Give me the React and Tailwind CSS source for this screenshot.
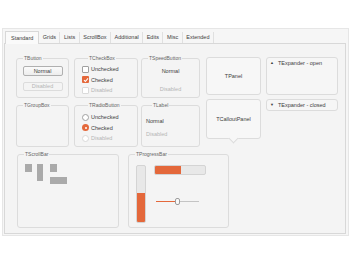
import React from 'react';

const tabs = ['Standard', 'Grids', 'Lists', 'ScrollBox', 'Additional', 'Edits', 'Misc', 'Extended'];

const Group = ({ title, className, children }) => (
    <fieldset className={`border border-[#dcdcdc] rounded-[3px] min-w-0 ${className}`}>
        <legend className="ml-[6px] px-[1px] text-[5px] leading-[6px] text-[#666]">{title}</legend>
        {children}
    </fieldset>
);

const Check = ({ state, label }) => (
    <div className="flex items-center gap-[2px] h-[10.5px]">
        {state === 'checked' ? (
            <div className="w-[7px] h-[7px] rounded-[1px] bg-[#e4683b] flex items-center justify-center">
                <svg width="6" height="6" viewBox="0 0 6 6">
                    <path d="M1 3.1 L2.4 4.5 L5 1.4" stroke="#fff" strokeWidth="1.1" fill="none" />
                </svg>
            </div>
        ) : (
            <div className={`w-[7px] h-[7px] rounded-[1px] border bg-white ${state === 'disabled' ? 'border-[#dadada]' : 'border-[#a0a0a0]'}`} />
        )}
        <span className={state === 'disabled' ? 'text-[#b4b4b4]' : 'text-[#404040]'}>{label}</span>
    </div>
);

const Radio = ({ state, label }) => (
    <div className="flex items-center gap-[2px] h-[10.5px]">
        {state === 'checked' ? (
            <div className="w-[7px] h-[7px] rounded-full bg-[#e4683b] flex items-center justify-center">
                <div className="w-[2px] h-[2px] rounded-full bg-white" />
            </div>
        ) : (
            <div className={`w-[7px] h-[7px] rounded-full border bg-white ${state === 'disabled' ? 'border-[#dadada]' : 'border-[#a0a0a0]'}`} />
        )}
        <span className={state === 'disabled' ? 'text-[#b4b4b4]' : 'text-[#404040]'}>{label}</span>
    </div>
);

export default function App() {
    return (
        <div className="w-[350px] h-[265px] bg-white font-['Liberation_Sans',Arial,sans-serif] text-[5.5px] text-[#404040] pt-[28px] pl-[2px]">
            <div className="w-[347px] h-[208px] bg-[#f6f6f6] border border-[#e6e6e6] pl-[1px] pt-[1px]">
                {/* tab strip */}
                <div className="flex h-[13px] items-end">
                    {tabs.map((t, i) => (
                        i === 0 ? (
                            <div key={t} className="h-[13px] px-[5px] flex items-center bg-[#fafafa] border border-b-0 border-[#d8d8d8] rounded-t-[1px] relative top-[1px] ml-[1px]">
                                {t}
                            </div>
                        ) : (
                            <div key={t} className="h-[12px] flex items-center">
                                <span className="px-[3.5px]">{t}</span>
                                <span className="w-px h-[11px] bg-[#e0e0e0]" />
                            </div>
                        )
                    ))}
                </div>

                {/* content panel */}
                <div className="w-[342px] h-[191px] bg-[#f4f4f4] border border-[#d8d8d8] pl-[11px] pt-[11px]">
                    <div className="flex items-start">
                        <div className="flex flex-col gap-[4px] w-[53px]">
                            <Group title="TButton" className="h-[43px]">
                                <div className="flex flex-col items-center pt-[5px] gap-[6px]">
                                    <div className="w-[40px] h-[10px] border border-[#b0b0b0] rounded-[2px] bg-gradient-to-b from-[#fbfbfb] to-[#ededed] flex items-center justify-center">Normal</div>
                                    <div className="w-[40px] h-[9px] border border-[#dcdcdc] rounded-[2px] bg-[#f4f4f4] flex items-center justify-center text-[#b4b4b4]">Disabled</div>
                                </div>
                            </Group>
                            <Group title="TGroupBox" className="h-[45px]" />
                        </div>

                        <div className="flex flex-col gap-[4px] w-[64px] ml-[5px]">
                            <Group title="TCheckBox" className="h-[43px] pl-[7px]">
                                <div className="pt-[3px]">
                                    <Check state="unchecked" label="Unchecked" />
                                    <Check state="checked" label="Checked" />
                                    <Check state="disabled" label="Disabled" />
                                </div>
                            </Group>
                            <Group title="TRadioButton" className="h-[45px] pl-[7px]">
                                <div className="pt-[4px]">
                                    <Radio state="unchecked" label="Unchecked" />
                                    <Radio state="checked" label="Checked" />
                                    <Radio state="disabled" label="Disabled" />
                                </div>
                            </Group>
                        </div>

                        <div className="flex flex-col gap-[4px] w-[59px] ml-[3px]">
                            <Group title="TSpeedButton" className="h-[43px]">
                                <div className="flex flex-col items-center pt-[6px] gap-[10px]">
                                    <span>Normal</span>
                                    <span className="text-[#b4b4b4]">Disabled</span>
                                </div>
                            </Group>
                            <Group title="TLabel" className="h-[45px] pl-[4px]">
                                <div className="flex flex-col pt-[9px] gap-[5px]">
                                    <span>Normal</span>
                                    <span className="text-[#b4b4b4]">Disabled</span>
                                </div>
                            </Group>
                        </div>

                        <div className="flex flex-col gap-[4px] w-[55px] ml-[6px] mt-[2px]">
                            <div className="h-[38px] border border-[#dcdcdc] rounded-[3px] bg-[#f7f7f7] flex items-center justify-center">TPanel</div>
                            <div className="relative h-[40px] border border-[#dcdcdc] rounded-[3px] bg-[#f7f7f7] flex items-center justify-center">
                                TCalloutPanel
                                <div className="absolute left-1/2 -bottom-[4px] -ml-[3.5px] w-[7px] h-[7px] rotate-45 bg-[#f7f7f7] border-r border-b border-[#dcdcdc]" />
                            </div>
                        </div>

                        <div className="flex flex-col gap-[4px] w-[72px] ml-[5px] mt-[2px]">
                            <div className="h-[38px] border border-[#dcdcdc] rounded-[3px] bg-[#f6f6f6]">
                                <div className="flex items-center h-[10px] pl-[3px] gap-[4px]">
                                    <span className="text-[4px]">▲</span>
                                    <span>TExpander - open</span>
                                </div>
                            </div>
                            <div className="h-[12px] border border-[#dcdcdc] rounded-[3px] bg-[#f6f6f6] flex items-center pl-[3px] gap-[4px]">
                                <span className="text-[4px]">▼</span>
                                <span>TExpander - closed</span>
                            </div>
                        </div>
                    </div>

                    <div className="flex items-start mt-[4px]">
                        <Group title="TScrollBar" className="w-[102px] h-[77px] ml-[1px]">
                            <div className="flex items-start pl-[7px] pt-[7px]">
                                <div className="w-[7px] h-[8px] bg-[#aaaaaa]" />
                                <div className="w-[6px] h-[17px] bg-[#aaaaaa] ml-[5px]" />
                                <div className="flex flex-col ml-[7px]">
                                    <div className="w-[7px] h-[8px] bg-[#aaaaaa]" />
                                    <div className="w-[17px] h-[7px] bg-[#aaaaaa] mt-[5px]" />
                                </div>
                            </div>
                        </Group>
                        <Group title="TProgressBar" className="w-[101px] h-[77px] ml-[9px]">
                            <div className="flex items-start pl-[7px] pt-[8px]">
                                <div className="w-[10px] h-[58px] border border-[#d4d4d4] rounded-[2px] bg-[#e8e8e8] flex flex-col justify-end overflow-hidden">
                                    <div className="h-[29px] bg-[#e4683b]" />
                                </div>
                                <div className="flex flex-col ml-[8px]">
                                    <div className="w-[52px] h-[10px] border border-[#d4d4d4] rounded-[2px] bg-[#e8e8e8] flex overflow-hidden">
                                        <div className="w-[26px] bg-[#e4683b]" />
                                    </div>
                                    <div className="flex items-center mt-[23px] ml-[2px] w-[43px] h-[7px]">
                                        <div className="w-[19px] h-[1.5px] bg-[#e4683b]" />
                                        <div className="w-[5px] h-[7px] rounded-[2px] border border-[#9c9c9c] bg-[#fafafa]" />
                                        <div className="flex-1 h-[1.5px] bg-[#c4c4c4]" />
                                    </div>
                                </div>
                            </div>
                        </Group>
                    </div>
                </div>
            </div>
        </div>
    );
}
